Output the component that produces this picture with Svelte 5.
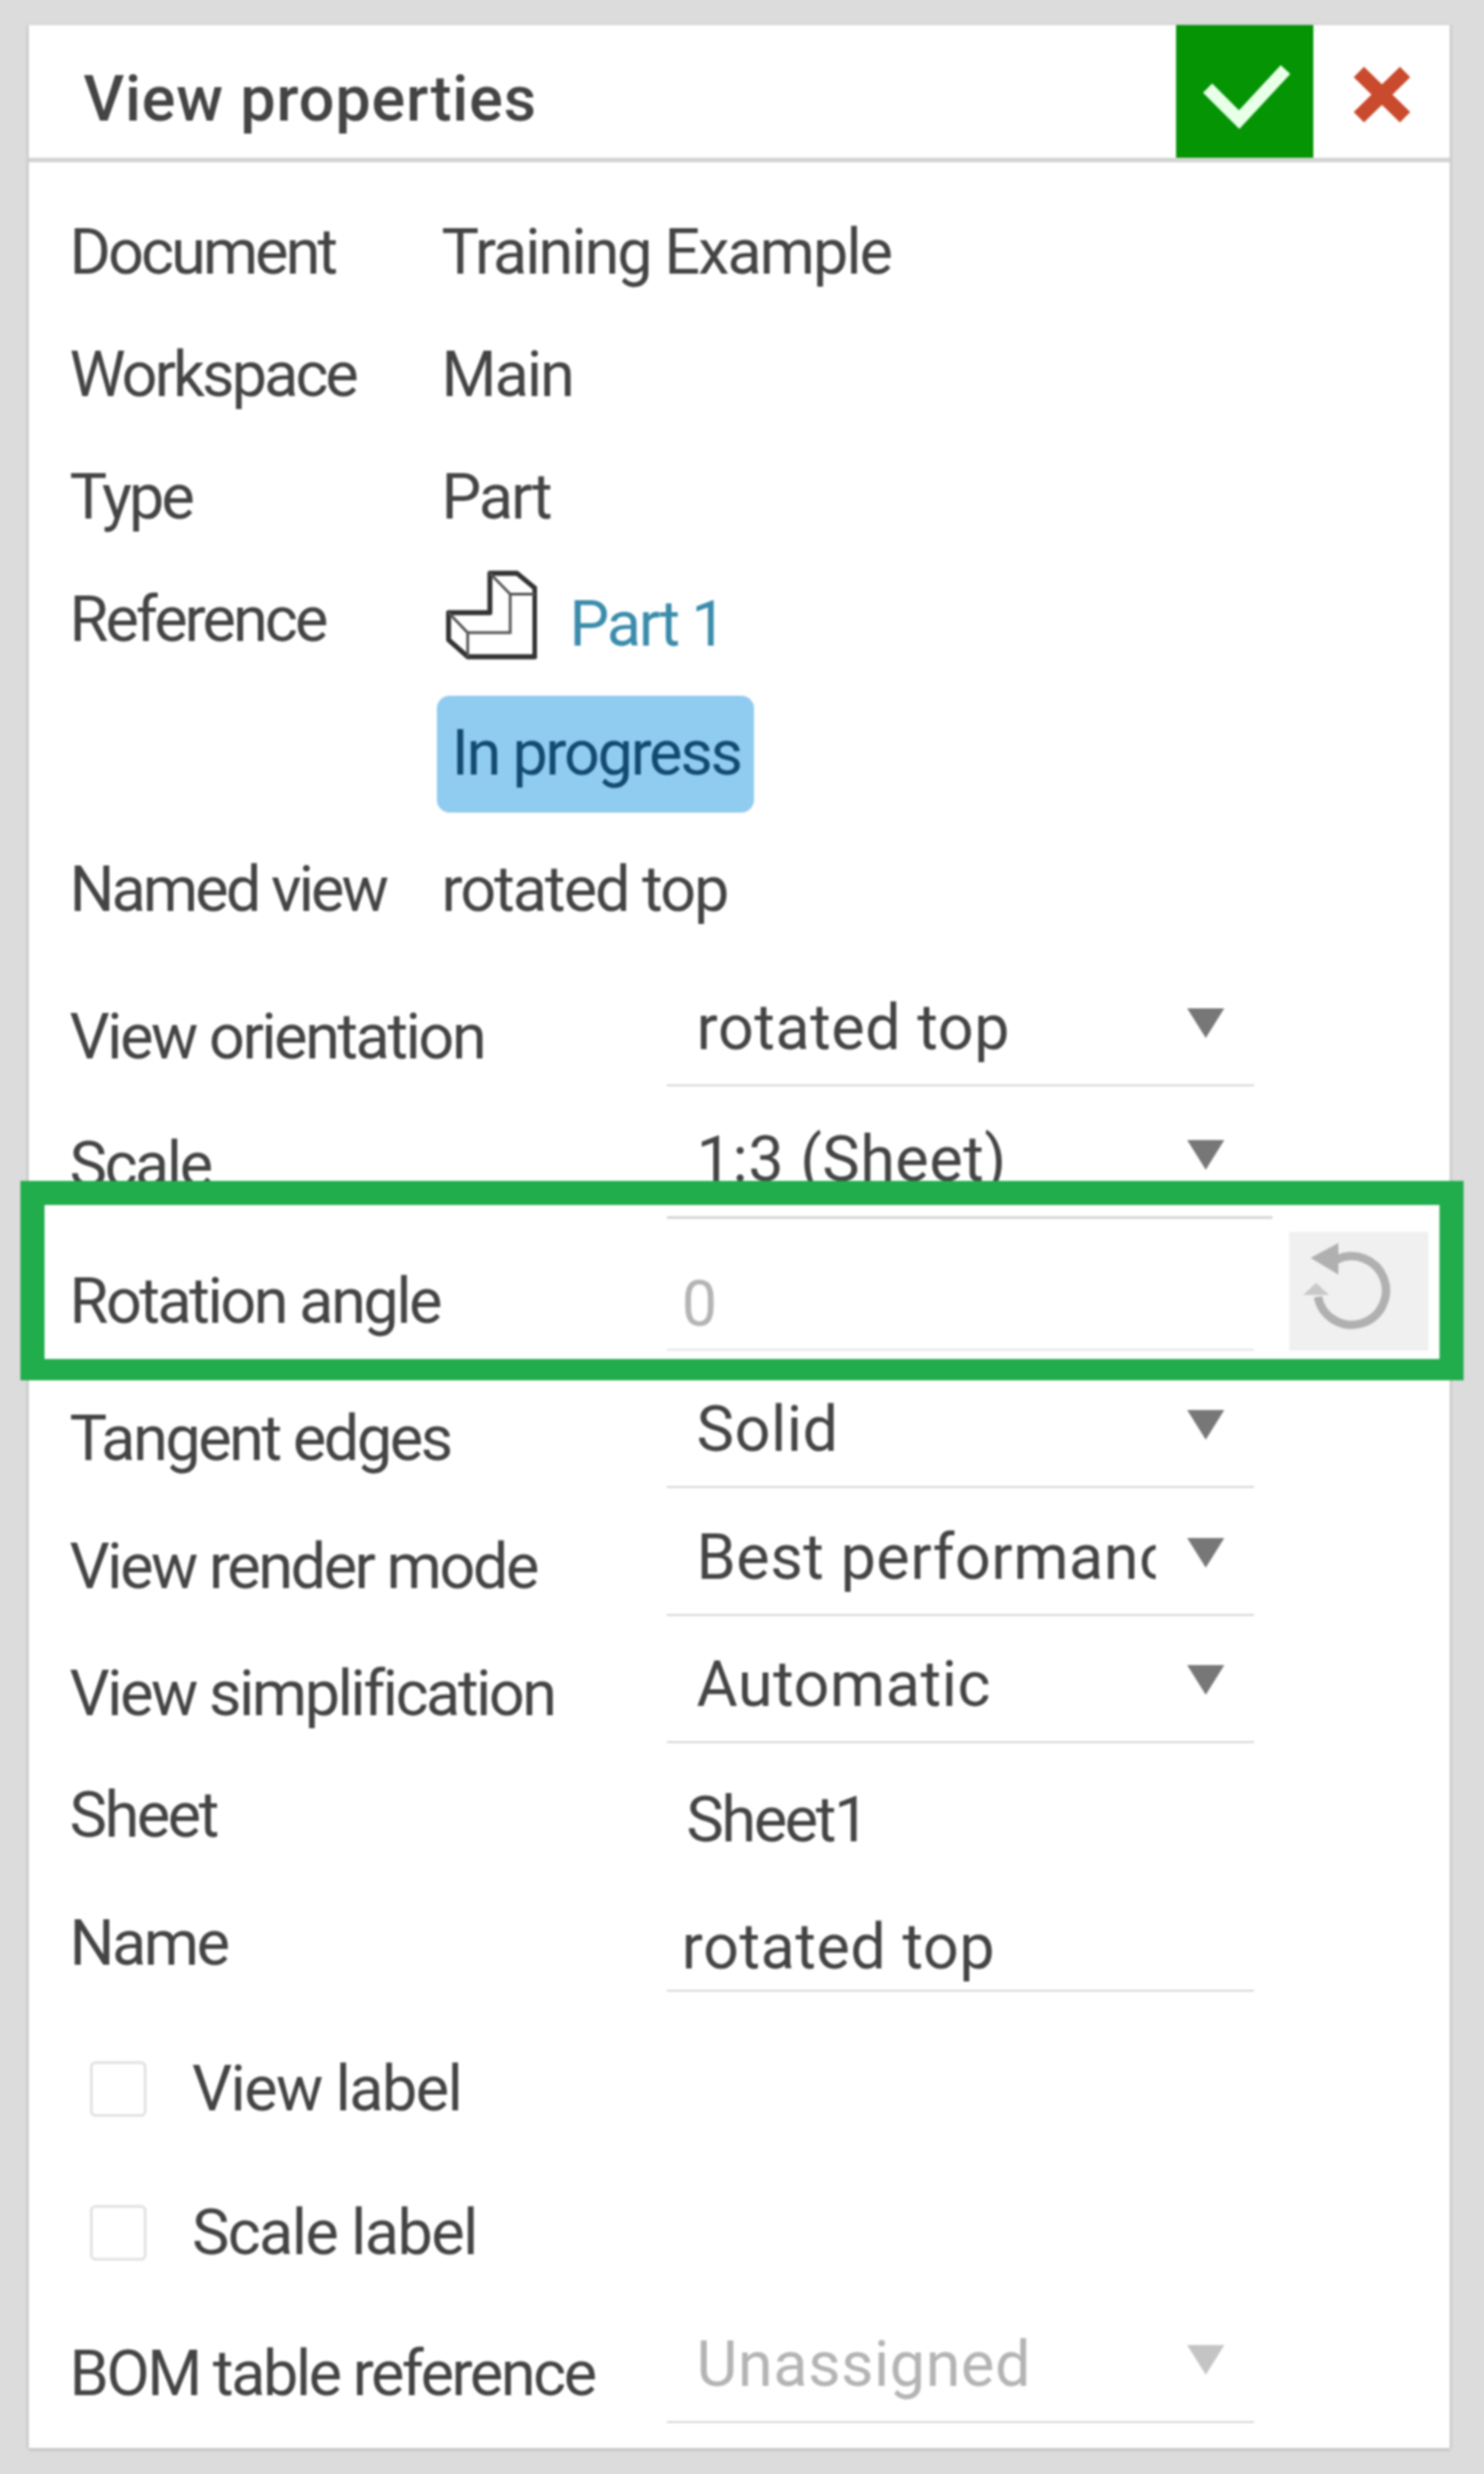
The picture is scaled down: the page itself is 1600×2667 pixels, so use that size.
<script>
	const infoRows = [
		{ label: 'Document', value: 'Training Example' },
		{ label: 'Workspace', value: 'Main' },
		{ label: 'Type', value: 'Part' }
	]
	const selects = [
		{ label: 'View orientation', value: 'rotated top', h: 146 },
		{ label: 'Scale', value: '1:3 (Sheet)', h: 143, wide: true }
	]
	const selectsBelow = [
		{ label: 'Tangent edges', value: 'Solid', h: 148 },
		{ label: 'View render mode', value: 'Best performance', h: 138 },
		{ label: 'View simplification', value: 'Automatic', h: 137 }
	]
</script>

{#snippet arrow()}
	<svg class="arrow" viewBox="0 0 40 32" aria-hidden="true"><path d="M0 0H40L20 32Z" /></svg>
{/snippet}

<div class="page">
	<div class="panel">
		<header>
			<h1>View properties</h1>
			<button class="ok" aria-label="Accept">
				<svg viewBox="0 0 148 143"><path d="M34 68 68 102 118 48" /></svg>
			</button>
			<button class="cancel" aria-label="Cancel">
				<svg viewBox="0 0 54 53"><path d="M5 5 49 48M49 5 5 48" /></svg>
			</button>
		</header>

		<div class="body">
			{#each infoRows as row}
				<div class="info">
					<span class="label">{row.label}</span>
					<span class="value">{row.value}</span>
				</div>
			{/each}
			<div class="info">
				<span class="label">Reference</span>
				<span class="value part">
					<svg class="part-icon" viewBox="120 55 295 285" aria-hidden="true">
						<path class="outline" d="M128 190H262V62H350L408 110V333H190L128 278Z" />
						<path class="inner" d="M128 190 190 255V333M190 255H328V130L262 62M328 130H408" />
					</svg>
					<span class="link">Part 1</span>
				</span>
			</div>
			<div class="badge-row"><span class="badge">In progress</span></div>
			<div class="info">
				<span class="label">Named view</span>
				<span class="value">rotated top</span>
			</div>

			{#each selects as row}
				<div class="field" class:scale-row={row.wide} style="height: {row.h}px">
					<span class="label">{row.label}</span>
					<div class="select" class:wide={row.wide}>
						<span>{row.value}</span>
						{@render arrow()}
					</div>
				</div>
			{/each}

			<div class="field rotation">
				<span class="label">Rotation angle</span>
				<div class="input disabled">0</div>
				<div class="reset">
					<svg viewBox="0 0 150 128" aria-hidden="true">
						<path class="ring" d="M51 30A37 37 0 1 1 31 70" />
						<path class="head" d="M23 28 53 12V46Z" />
						<path class="head light" d="M15 68H43L29 55Z" />
					</svg>
				</div>
			</div>

			{#each selectsBelow as row}
				<div class="field" style="height: {row.h}px">
					<span class="label">{row.label}</span>
					<div class="select">
						<span class="clip">{row.value}</span>
						{@render arrow()}
					</div>
				</div>
			{/each}

			<div class="field sheet">
				<span class="label">Sheet</span>
				<span class="sheet-value">Sheet1</span>
			</div>
			<div class="field name">
				<span class="label">Name</span>
				<div class="input">rotated top</div>
			</div>

			<label class="check"><span class="box"></span>View label</label>
			<label class="check"><span class="box"></span>Scale label</label>

			<div class="field bom">
				<span class="label">BOM table reference</span>
				<div class="select disabled">
					<span>Unassigned</span>
					{@render arrow()}
				</div>
			</div>
		</div>
	</div>
	<div class="highlight"></div>
</div>

<style>
	:global(body) {
		margin: 0;
		background: #dcdcdc;
	}

	.page {
		position: relative;
		box-sizing: border-box;
		height: 2667px;
		padding: 27px 37px 30px 31px;
		font-family: Roboto, 'Liberation Sans', sans-serif;
		font-size: 68px;
		line-height: 80px;
		color: #444;
		letter-spacing: -2.2px;
		filter: blur(1.2px);
		background: #dcdcdc;
	}

	.panel {
		background: #fff;
		box-shadow: -2px 0 2px #c8c8c8, 2px 0 2px #c8c8c8, 0 3px 3px #c4c4c4;
	}

	header {
		display: flex;
		height: 143px;
		border-bottom: 5px solid #d4d4d4;
	}

	h1 {
		flex: 1;
		margin: 0;
		padding: 0 0 0 59px;
		font-size: 68px;
		font-weight: 500;
		line-height: 160px;
		letter-spacing: 0.8px;
		color: #444;
	}

	button {
		border: 0;
		padding: 0;
		background: none;
	}

	.ok {
		width: 148px;
		height: 143px;
		background: #049404;
	}

	.ok svg {
		display: block;
		fill: none;
		stroke: #e8ffe8;
		stroke-width: 14;
	}

	.cancel {
		display: flex;
		align-items: center;
		justify-content: flex-end;
		width: 147px;
		padding: 6px 42px 0 0;
		box-sizing: border-box;
	}

	.cancel svg {
		width: 62px;
		height: 60px;
		fill: none;
		stroke: #c94a2c;
		stroke-width: 14;
	}

	.body {
		padding: 31px 0 27px 44px;
	}

	.info {
		display: flex;
		align-items: center;
		height: 132px;
	}

	.label {
		letter-spacing: -2.7px;
	}

	.info .label {
		width: 401px;
		letter-spacing: -3.2px;
	}

	.part {
		display: flex;
		align-items: center;
	}

	.part-icon {
		width: 98px;
		height: 98px;
		margin: -10px 35px 0 5px;
		stroke: #333;
		fill: none;
	}

	.outline {
		stroke-width: 16;
		stroke-linejoin: round;
		fill: #fff;
	}

	.inner {
		stroke-width: 9;
		stroke: #555;
	}

	.link {
		color: #3b8cab;
		padding-top: 10px;
		letter-spacing: -2.4px;
	}

	.badge-row {
		height: 126px;
		margin: 16px 0 17px;
		padding-left: 396px;
	}

	.badge {
		display: inline-block;
		box-sizing: border-box;
		width: 342px;
		height: 126px;
		padding: 0 0 0 16px;
		border-radius: 14px;
		background: #90cbf0;
		color: #124a72;
		line-height: 124px;
		letter-spacing: -2.5px;
	}

	.field {
		display: flex;
		align-items: flex-end;
	}

	.field .label {
		width: 644px;
		flex: none;
		padding-bottom: 13px;
	}

	.field.scale-row .label {
		padding-bottom: 18px;
	}

	.select,
	.input {
		box-sizing: border-box;
		display: flex;
		justify-content: space-between;
		width: 633px;
		border-bottom: 2px solid #d6d6d6;
		padding-bottom: 21px;
		letter-spacing: 0.5px;
	}

	.select {
		padding-left: 32px;
	}

	.select.wide {
		width: 653px;
		border-bottom-width: 3px;
		padding-right: 20px;
	}

	.input {
		padding-left: 16px;
		padding-bottom: 6px;
	}

	.disabled {
		color: #b4b4b4;
	}

	.clip {
		width: 495px;
		overflow: hidden;
		white-space: nowrap;
	}

	.arrow {
		flex: none;
		width: 40px;
		height: 32px;
		margin: 19px 32px 0 0;
		fill: #777;
	}

	.disabled .arrow {
		fill: #c4c4c4;
	}

	.rotation {
		height: 142px;
		position: relative;
	}

	.rotation .input {
		height: 90px;
		border-bottom-color: #e4e4e4;
	}

	.reset {
		margin-left: 38px;
		width: 150px;
		height: 128px;
		flex: none;
		background: #f0f0f0;
	}

	.reset svg {
		display: block;
	}

	.ring {
		fill: none;
		stroke: #b0b0b0;
		stroke-width: 9;
	}

	.head {
		fill: #b0b0b0;
	}

	.head.light {
		fill: #c8c8c8;
	}

	.sheet {
		height: 133px;
	}

	.field.sheet .label {
		width: 665px;
		padding-bottom: 15px;
	}

	.sheet-value {
		padding-bottom: 10px;
		letter-spacing: -2.6px;
	}

	.name {
		height: 135px;
	}

	.field.name .label {
		padding-bottom: 12px;
	}

	.check {
		display: flex;
		align-items: center;
		height: 155px;
		padding-left: 22px;
		letter-spacing: -1.8px;
	}

	.check:first-of-type {
		margin-top: 27px;
	}

	.box {
		box-sizing: border-box;
		width: 61px;
		height: 60px;
		margin-right: 49px;
		border: 3px solid #e2e2e2;
		border-radius: 6px;
	}

	.bom {
		height: 128px;
	}

	.highlight {
		position: absolute;
		left: 22px;
		top: 1273px;
		box-sizing: border-box;
		width: 1556px;
		height: 215px;
		border: solid #22ad4c;
		border-width: 26px 26px 23px;
	}
</style>
